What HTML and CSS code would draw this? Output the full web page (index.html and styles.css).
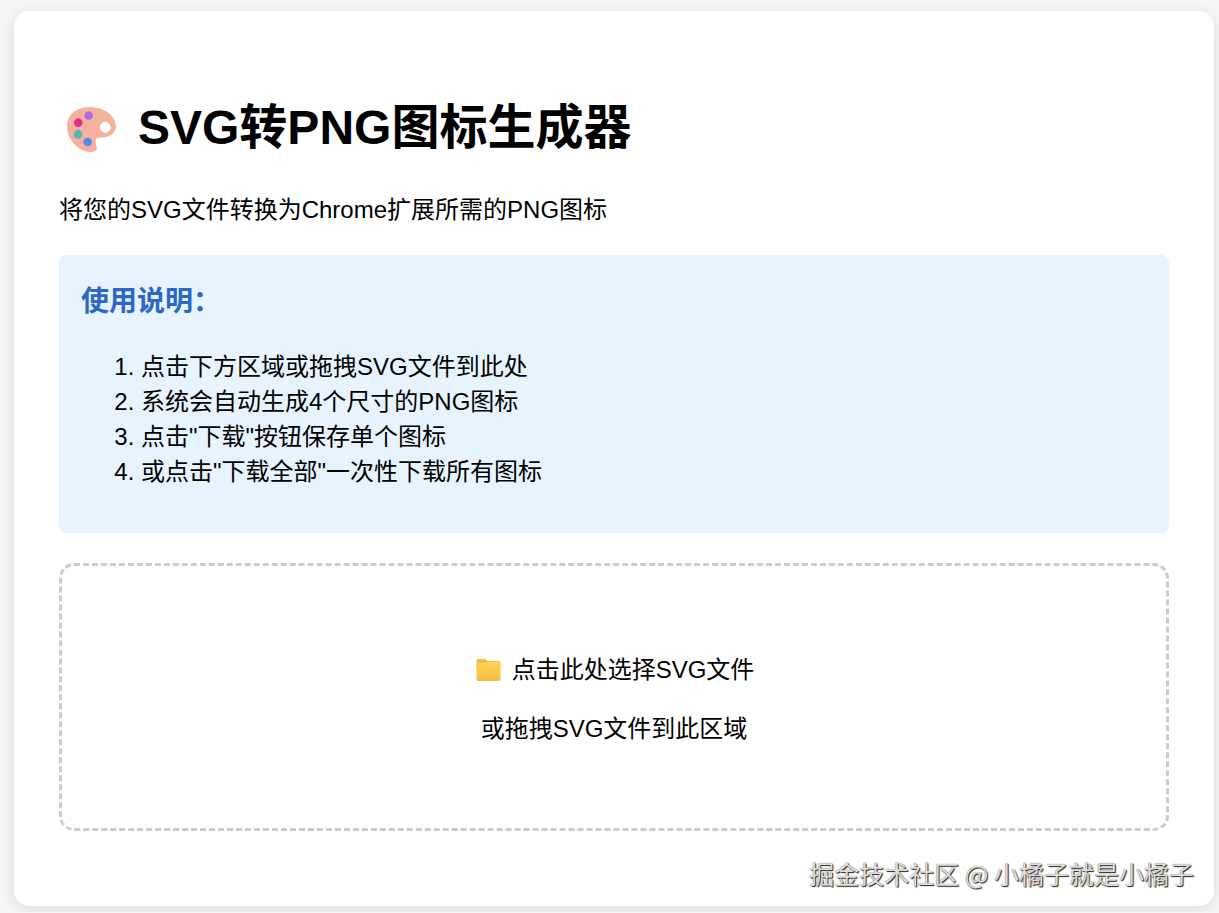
FILE: index.html
```html
<!DOCTYPE html>
<html lang="zh-CN">
<head>
    <meta charset="UTF-8">
    <meta name="viewport" content="width=device-width, initial-scale=1.0">
    <title>SVG转PNG图标生成器</title>
    <link rel="stylesheet" href="styles.css">
</head>
<body>
    <div class="container">
        <h1 class="title">
            <svg class="palette" viewBox="0 0 48 44" aria-hidden="true">
                <defs>
                    <linearGradient id="paletteFill" x1="0" y1="0" x2="0" y2="1">
                        <stop offset="0" stop-color="#f1b49c"/>
                        <stop offset="1" stop-color="#fbaea0"/>
                    </linearGradient>
                </defs>
                <path fill="url(#paletteFill)" fill-rule="evenodd" d="M22 0C8 0 0 9 0 18c0 14 11 26 24 26 4 0 6-2 5-5-1-5-3-9 3-9 9 0 16-4 16-11C48 9 37 0 22 0zM37.500 14.500a5.300 5.300 0 1 1 0 10.600 5.300 5.300 0 0 1 0-10.600z"/>
                <circle cx="21.200" cy="8.200" r="4.200" fill="#b565ea"/>
                <circle cx="11" cy="15.300" r="4.200" fill="#e7298f"/>
                <circle cx="11" cy="26.800" r="4.200" fill="#51b9ae"/>
                <circle cx="20.200" cy="34.300" r="4.200" fill="#4b91e8"/>
            </svg>
            SVG转PNG图标生成器
        </h1>
        <p class="intro">将您的SVG文件转换为Chrome扩展所需的PNG图标</p>

        <div class="instructions">
            <h3>使用说明：</h3>
            <ol>
                <li>点击下方区域或拖拽SVG文件到此处</li>
                <li>系统会自动生成4个尺寸的PNG图标</li>
                <li>点击"下载"按钮保存单个图标</li>
                <li>或点击"下载全部"一次性下载所有图标</li>
            </ol>
        </div>

        <label class="upload-area" for="fileInput">
            <span class="upload-line">
                <svg class="folder" viewBox="0 0 24 22" aria-hidden="true">
                    <defs>
                        <linearGradient id="folderFill" x1="0" y1="0" x2="0" y2="1">
                            <stop offset="0" stop-color="#ffd653"/>
                            <stop offset="1" stop-color="#f6b840"/>
                        </linearGradient>
                    </defs>
                    <path fill="#f2bd3c" d="M0 2Q0 0 2 0h6q1 0 2 1l1 1h11q2 0 2 2v6H0z"/>
                    <path fill="url(#folderFill)" d="M0 4h8q1 0 2-1h12q2 0 2 2v15q0 2-2 2H2q-2 0-2-2z"/>
                </svg>
                点击此处选择SVG文件
            </span>
            <span class="upload-line">或拖拽SVG文件到此区域</span>
            <input class="file-input" type="file" id="fileInput" accept=".svg">
        </label>

        <div class="watermark">掘金技术社区 @ 小橘子就是小橘子</div>
    </div>
</body>
</html>
```

FILE: styles.css
```css
body {
    margin: 0;
    padding: 11px 5px 6px 14px;
    font-family: "Liberation Sans", Arial, "Noto Sans CJK SC", sans-serif;
    font-size: 24px;
    line-height: 35px;
    color: #000;
    background: #f5f5f5;
}
.container {
    position: relative;
    padding: 45px;
    background: white;
    border-radius: 15px;
    box-shadow: 0 3px 15px rgba(0, 0, 0, 0.1);
}
.title {
    display: flex;
    align-items: center;
    gap: 22px;
    margin: 44px 0 36px;
    padding-left: 8px;
    font-size: 48px;
    line-height: 56px;
}
.palette {
    width: 49px;
    height: 45px;
    padding-top: 2px;
}
.intro {
    margin: 0 0 28px;
}
.instructions {
    padding: 24px 22px 22px;
    background: #e7f3ff;
    border-radius: 8px;
}
.instructions h3 {
    margin: 0 0 24px;
    font-size: 28px;
    line-height: 46px;
    color: #2b66c8;
}
.instructions ol {
    margin: 0 0 22px;
    padding-left: 60px;
}
.upload-area {
    display: flex;
    flex-direction: column;
    align-items: center;
    gap: 24px;
    margin: 30px 0;
    padding: 86px 30px 82px;
    border: 3px dashed #ccc;
    border-radius: 15px;
    cursor: pointer;
}
.upload-area:hover {
    border-color: #2b66c8;
}
.upload-line {
    display: flex;
    align-items: center;
    gap: 11px;
}
.folder {
    width: 25px;
    height: 22px;
    padding-left: 2px;
}
.file-input {
    position: absolute;
    width: 1px;
    height: 1px;
    opacity: 0;
}
.watermark {
    position: absolute;
    right: 20px;
    bottom: 15px;
    font-family: "Noto Sans CJK SC", sans-serif;
    font-size: 25px;
    line-height: 36px;
    color: #ddd;
    text-shadow: 1px 1px 1px #222, 0 0 1px #666;
}
```
